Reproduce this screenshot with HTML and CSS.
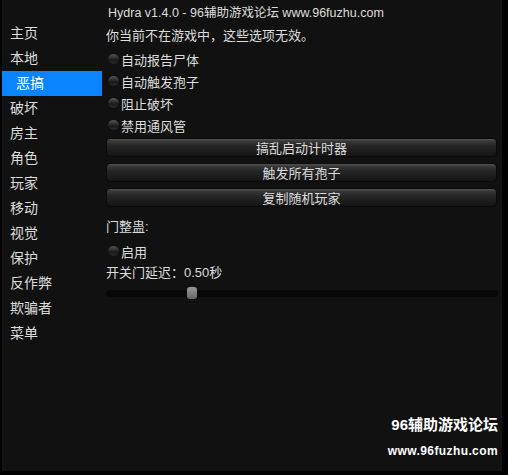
FILE: index.html
```html
<!DOCTYPE html>
<html lang="zh">
<head>
    <meta charset="UTF-8">
    <title>Hydra</title>
    <link rel="stylesheet" href="styles.css">
</head>
<body>
    <div class="wrap">
        <div class="side">
            <div class="nav">主页</div>
            <div class="nav">本地</div>
            <div class="nav on">恶搞</div>
            <div class="nav">破坏</div>
            <div class="nav">房主</div>
            <div class="nav">角色</div>
            <div class="nav">玩家</div>
            <div class="nav">移动</div>
            <div class="nav">视觉</div>
            <div class="nav">保护</div>
            <div class="nav">反作弊</div>
            <div class="nav">欺骗者</div>
            <div class="nav">菜单</div>
        </div>
        <div class="main">
            <div class="title">Hydra v1.4.0 - 96辅助游戏论坛 www.96fuzhu.com</div>
            <div class="txt top">你当前不在游戏中，这些选项无效。</div>
            <div class="checks">
                <div class="chk"><span class="dot"></span>自动报告尸体</div>
                <div class="chk"><span class="dot"></span>自动触发孢子</div>
                <div class="chk"><span class="dot"></span>阻止破坏</div>
                <div class="chk"><span class="dot"></span>禁用通风管</div>
            </div>
            <div class="btns">
                <div class="btn">搞乱启动计时器</div>
                <div class="btn">触发所有孢子</div>
                <div class="btn">复制随机玩家</div>
            </div>
            <div class="txt sec">门整蛊:</div>
            <div class="chk sec-chk"><span class="dot"></span>启用</div>
            <div class="txt">开关门延迟：0.50秒</div>
            <div class="slider"><span class="thumb" style="left: 81px;"></span></div>
        </div>
        <div class="mark">
            <div class="mark-1">96辅助游戏论坛</div>
            <div class="mark-2">www.96fuzhu.com</div>
        </div>
    </div>
</body>
</html>
```

FILE: styles.css
```css
*{ margin: 0; padding: 0; box-sizing: border-box;}
html, body{ background: #000; width: 508px; height: 475px; overflow: hidden;}
body{ font-family: "Liberation Sans", "Noto Sans CJK SC", sans-serif; color: #ddd; font-size: 13px;}

.wrap{ position: relative; margin-left: 2px; width: 500px; height: 471px; background: #111; display: flex;}

.side{ width: 100px; padding-top: 21px;}
.nav{ height: 25px; line-height: 25px; padding-left: 8px; font-size: 14px;}
.nav.on{ background: #0a84ff; padding-left: 14px; color: #fff;}

.main{ flex: 1; padding: 4px 3px 0 4px;}
.title{ height: 18px; line-height: 18px; padding-left: 2px; font-size: 12.5px;}
.txt{ height: 22px; line-height: 22px; font-size: 13px;}
.txt.top{ margin-top: 3px;}
.checks{ margin-top: 1px;}
.chk{ display: flex; align-items: center; height: 22px; font-size: 13px;}
.dot{ width: 11px; height: 10px; border-radius: 50%; margin: 0 2px 0 2px; background: linear-gradient(#555, #2a2a2a 45%, #1a1a1a 60%, #2c2c2c); box-shadow: 0 0 1px #000;}

.btns{ display: flex; flex-direction: column; gap: 6px; margin-top: 2px; margin-bottom: 8px; width: 391px;}
.btn{ height: 19px; line-height: 19px; text-align: center; border-radius: 4px; background: linear-gradient(#555 0, #3a3a3a 2px, #262626 40%, #141414 100%); border: 1px solid #0a0a0a; font-size: 13px;}

.sec{ margin-top: 9px;}
.sec-chk{ margin-top: 2px;}
.slider{ position: relative; height: 7px; width: 392px; margin-top: 6px; border-radius: 4px; background: #080808;}
.thumb{ position: absolute; top: -3px; width: 10px; height: 12px; border-radius: 3px; background: linear-gradient(#999, #666);}

.mark{ position: absolute; right: 4px; bottom: 10px; text-align: right; color: #fff; font-weight: bold;}
.mark-1{ font-size: 15px; line-height: 20px;}
.mark-2{ font-size: 12px; letter-spacing: 0.4px; line-height: 20px; margin-top: 6px;}
```
